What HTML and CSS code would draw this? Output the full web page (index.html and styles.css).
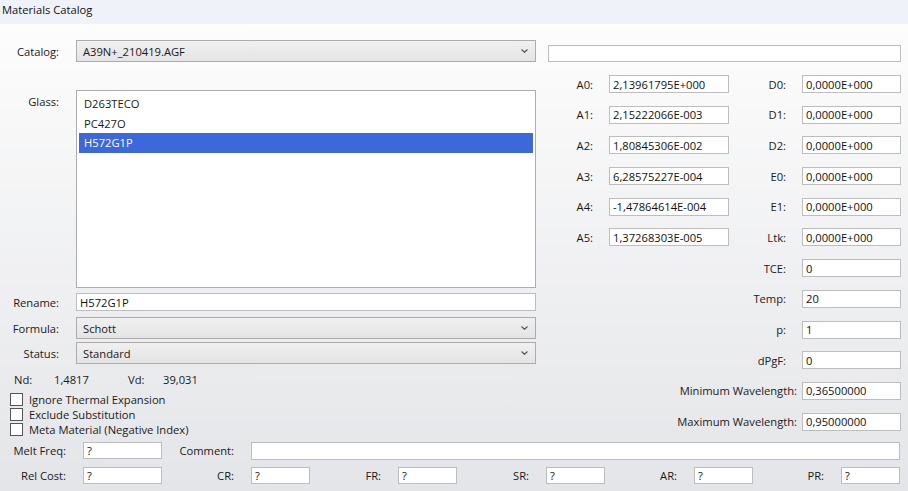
FILE: index.html
```html
<!DOCTYPE html>
<html lang="en">
<head>
    <meta charset="UTF-8">
    <meta name="viewport" content="width=device-width, initial-scale=1.0">
    <title>Materials Catalog</title>
    <link rel="stylesheet" href="styles.css">
</head>
<body>
    <div class="window">
        <div class="titlebar">Materials Catalog</div>

        <div class="panels">
            <!-- Catalog / glass selection -->
            <div class="left">
                <div class="row catalog-row">
                    <span class="lbl">Catalog:</span>
                    <div class="combo">
                        <span>A39N+_210419.AGF</span>
                        <svg class="chevron" width="7" height="4" viewBox="0 0 7 4"><polyline points="0.5,0.5 3.5,3.3 6.5,0.5" fill="none" stroke="#5a5a5a" stroke-width="1.2"/></svg>
                    </div>
                </div>

                <div class="row glass-row">
                    <span class="lbl">Glass:</span>
                    <div class="listbox">
                        <div class="item">D263TECO</div>
                        <div class="item">PC427O</div>
                        <div class="item selected">H572G1P</div>
                    </div>
                </div>

                <div class="row rename-row">
                    <span class="lbl">Rename:</span>
                    <input class="field" type="text" value="H572G1P">
                </div>

                <div class="row formula-row">
                    <span class="lbl">Formula:</span>
                    <div class="combo">
                        <span>Schott</span>
                        <svg class="chevron" width="7" height="4" viewBox="0 0 7 4"><polyline points="0.5,0.5 3.5,3.3 6.5,0.5" fill="none" stroke="#5a5a5a" stroke-width="1.2"/></svg>
                    </div>
                </div>

                <div class="row status-row">
                    <span class="lbl">Status:</span>
                    <div class="combo">
                        <span>Standard</span>
                        <svg class="chevron" width="7" height="4" viewBox="0 0 7 4"><polyline points="0.5,0.5 3.5,3.3 6.5,0.5" fill="none" stroke="#5a5a5a" stroke-width="1.2"/></svg>
                    </div>
                </div>

                <div class="indices">
                    <span class="nd-lbl">Nd:</span>
                    <span class="nd-val">1,4817</span>
                    <span class="vd-lbl">Vd:</span>
                    <span>39,031</span>
                </div>

                <div class="checks">
                    <label class="check"><span class="box"></span>Ignore Thermal Expansion</label>
                    <label class="check"><span class="box"></span>Exclude Substitution</label>
                    <label class="check"><span class="box"></span>Meta Material (Negative Index)</label>
                </div>
            </div>

            <!-- Dispersion / thermal coefficients -->
            <div class="right">
                <input class="field top-field" type="text" value="">

                <div class="coeffs">
                    <span class="lbl-a">A0:</span><input class="field" type="text" value="2,13961795E+000">
                    <span class="lbl-d">D0:</span><input class="field" type="text" value="0,0000E+000">

                    <span class="lbl-a">A1:</span><input class="field" type="text" value="2,15222066E-003">
                    <span class="lbl-d">D1:</span><input class="field" type="text" value="0,0000E+000">

                    <span class="lbl-a">A2:</span><input class="field" type="text" value="1,80845306E-002">
                    <span class="lbl-d">D2:</span><input class="field" type="text" value="0,0000E+000">

                    <span class="lbl-a">A3:</span><input class="field" type="text" value="6,28575227E-004">
                    <span class="lbl-d">E0:</span><input class="field" type="text" value="0,0000E+000">

                    <span class="lbl-a">A4:</span><input class="field" type="text" value="-1,47864614E-004">
                    <span class="lbl-d">E1:</span><input class="field" type="text" value="0,0000E+000">

                    <span class="lbl-a">A5:</span><input class="field" type="text" value="1,37268303E-005">
                    <span class="lbl-d">Ltk:</span><input class="field" type="text" value="0,0000E+000">

                    <span class="lbl-d solo">TCE:</span><input class="field" type="text" value="0">
                    <span class="lbl-d solo">Temp:</span><input class="field" type="text" value="20">
                    <span class="lbl-d solo">p:</span><input class="field" type="text" value="1">
                    <span class="lbl-d solo">dPgF:</span><input class="field" type="text" value="0">
                    <span class="lbl-w">Minimum Wavelength:</span><input class="field" type="text" value="0,36500000">
                    <span class="lbl-w">Maximum Wavelength:</span><input class="field" type="text" value="0,95000000">
                </div>
            </div>
        </div>

        <!-- Cost / resistance ratings -->
        <div class="extra">
            <span class="lbl">Melt Freq:</span><input class="field" type="text" value="?">
            <span class="lbl">Comment:</span><input class="field comment" type="text" value="">

            <span class="lbl">Rel Cost:</span><input class="field" type="text" value="?">
            <span class="lbl">CR:</span><input class="field" type="text" value="?">
            <span class="lbl">FR:</span><input class="field" type="text" value="?">
            <span class="lbl">SR:</span><input class="field" type="text" value="?">
            <span class="lbl">AR:</span><input class="field" type="text" value="?">
            <span class="lbl">PR:</span><input class="field" type="text" value="?">
        </div>
    </div>
</body>
</html>
```

FILE: styles.css
```css
* {
    box-sizing: border-box;
}

body {
    margin: 0;
    font-family: "Open Sans", "Noto Sans", sans-serif;
    font-size: 11.2px;
    color: #1a1a1a;
}

.window {
    width: 908px;
    height: 491px;
    overflow: hidden;
    background: linear-gradient(#fefefe, #e4e5e8);
}

.titlebar {
    height: 24px;
    line-height: 20px;
    padding-left: 2px;
    background-color: #eff2f9;
    color: #111;
}

.panels {
    display: flex;
}

/* ---------- left side ---------- */

.left {
    width: 540px;
    padding-top: 16px;
}

.row {
    display: grid;
    grid-template-columns: 76px 460px;
    align-items: center;
}

.lbl {
    text-align: right;
    padding-right: 17px;
}

.glass-row {
    margin-top: 28px;
    align-items: start;
}

.glass-row .lbl {
    padding-top: 4px;
}

.rename-row {
    margin-top: 5px;
}

.formula-row {
    margin-top: 6px;
}

.status-row {
    margin-top: 3px;
}

.combo {
    height: 22px;
    display: flex;
    align-items: center;
    justify-content: space-between;
    padding: 0 7px 0 6px;
    border: 1px solid #acacac;
    background: linear-gradient(#f0f0f0, #e4e4e4);
}

.listbox {
    height: 198px;
    border: 1px solid #acacac;
    background-color: #fff;
    padding: 3px 2px 0 2px;
}

.item {
    height: 19.5px;
    line-height: 19px;
    padding-left: 5px;
}

.item.selected {
    background-color: #3d68dc;
    color: #fff;
}

.field {
    height: 18px;
    margin: 0;
    padding: 0 3px;
    border: 1px solid #bdbdbd;
    background-color: #fff;
    font-family: inherit;
    font-size: inherit;
    color: #111;
    outline: none;
}

.indices {
    margin-top: 8px;
    height: 16px;
    line-height: 16px;
    padding-left: 14px;
    display: flex;
}

.nd-lbl {
    width: 40px;
}

.nd-val {
    width: 74px;
}

.vd-lbl {
    width: 35px;
}

.checks {
    margin-top: 4px;
    display: flex;
    flex-direction: column;
}

.check {
    height: 15px;
    display: flex;
    align-items: center;
    gap: 6px;
    padding-left: 10px;
}

.box {
    width: 13px;
    height: 13px;
    border: 1px solid #555;
    background-color: #fff;
}

/* ---------- right side ---------- */

.right {
    margin-left: 8px;
    width: 353px;
    padding-top: 21px;
}

.top-field {
    width: 353px;
    height: 17px;
}

.coeffs {
    margin-top: 13px;
    display: grid;
    grid-template-columns: 61px 120px 73px 99px;
    grid-auto-rows: 18px;
    row-gap: 12.7px;
    align-items: center;
}

.lbl-a,
.lbl-d {
    text-align: right;
    padding-right: 16px;
}

.lbl-d.solo {
    grid-column: 3;
}

.lbl-w {
    grid-column: 1 / 4;
    text-align: right;
    padding-right: 5px;
}

/* ---------- bottom rows ---------- */

.extra {
    margin-top: 5px;
    display: grid;
    grid-template-columns: 83px 79px 89px 59px 88px 59px 89px 59px 89px 59px 88px 59px;
    grid-auto-rows: 17px;
    row-gap: 8px;
    align-items: center;
}

.extra .field {
    height: 17px;
}

.extra .comment {
    grid-column: 4 / 13;
    height: 18px;
}
```
